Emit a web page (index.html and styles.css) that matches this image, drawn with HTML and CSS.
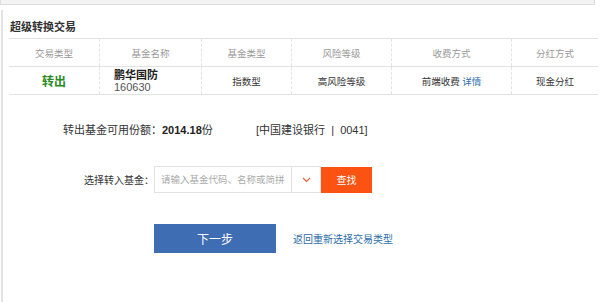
FILE: index.html
```html
<!DOCTYPE html>
<html lang="zh-cn">
<head>
  <meta charset="UTF-8" />
  <title>超级转换交易</title>
  <link rel="stylesheet" href="styles.css">
</head>
<body>
  <div class="topbar"></div>

  <div class="panel">
    <h2>超级转换交易</h2>

    <table class="fund-table">
      <tr>
        <th class="c1">交易类型</th>
        <th class="c2">基金名称</th>
        <th class="c3">基金类型</th>
        <th class="c4">风险等级</th>
        <th class="c5">收费方式</th>
        <th class="c6">分红方式</th>
      </tr>
      <tr>
        <td class="out">转出</td>
        <td class="name"><b>鹏华国防</b><span>160630</span></td>
        <td>指数型</td>
        <td>高风险等级</td>
        <td>前端收费 <a href="#">详情</a></td>
        <td>现金分红</td>
      </tr>
    </table>

    <div class="amount">
      <span class="label">转出基金可用份额：<b>2014.18</b>份</span>
      <span class="bank">[中国建设银行 &nbsp;|&nbsp; 0041]</span>
    </div>

    <form class="pick">
      <label>选择转入基金：</label>
      <div class="combo">
        <input type="text" placeholder="请输入基金代码、名称或简拼" />
        <span class="arrow">
          <svg width="9" height="6" viewBox="0 0 9 6"><path d="M1 1 L4.5 4.5 L8 1" fill="none" stroke="#e8623a" stroke-width="1.2"/></svg>
        </span>
      </div>
      <button type="button" class="btn-find">查找</button>
    </form>

    <div class="actions">
      <button type="button" class="btn-next">下一步</button>
      <a href="#" class="back">返回重新选择交易类型</a>
    </div>
  </div>
</body>
</html>
```

FILE: styles.css
```css
body {
  margin: 0;
  font-family: "Liberation Sans", Arial, "Noto Sans CJK SC", sans-serif;
  font-size: 11px;
  color: #333;
  background: #fff;
}
.topbar {
  height: 4px;
  margin-right: 5px;
  background: #f3f3f3;
  border: 1px solid #ddd;
  border-top: none;
}
.panel {
  margin: 5px 0 0 1px;
  border-left: 2px solid #e4e4e4;
  padding: 0 8px 0 6px;
  height: 292px;
  box-sizing: border-box;
}
h2 {
  margin: 0;
  padding: 8px 0 0 1px;
  height: 20px;
  font-size: 11px;
  font-weight: bold;
  color: #333;
}
.fund-table {
  width: 584px;
  border-collapse: collapse;
  table-layout: fixed;
}
.fund-table th,
.fund-table td {
  height: 27px;
  padding: 0;
  text-align: center;
  font-size: 9.5px;
  border-top: 1px solid #e2e2e2;
  border-bottom: 1px solid #e2e2e2;
  border-left: 1px dashed #e4e4e4;
}
.fund-table th:first-child,
.fund-table td:first-child {
  border-left: none;
}
.fund-table th {
  font-weight: normal;
  color: #999;
}
.c1 { width: 90px; }
.c2 { width: 101px; }
.c3 { width: 89px; }
.c4 { width: 99px; }
.c5 { width: 119px; }
.c6 { width: 86px; }
.fund-table td.out {
  color: #2c8a24;
  font-weight: bold;
  font-size: 12px;
}
.fund-table td.name {
  text-align: left;
  padding-left: 14px;
  line-height: 12px;
}
.name b {
  display: block;
  font-size: 11px;
  color: #222;
}
.name span {
  display: block;
  color: #555;
  font-size: 11px;
}
.fund-table a {
  color: #2a6db0;
  text-decoration: none;
}
.amount {
  display: flex;
  padding: 26px 0 0 54px;
  height: 18px;
}
.amount .label {
  width: 193px;
}
.amount b {
  color: #222;
}
.pick {
  display: flex;
  align-items: center;
  margin: 0;
  padding: 27px 0 0 0;
}
.pick label {
  width: 145px;
  text-align: right;
  font-size: 10px;
}
.combo {
  display: flex;
  border: 1px solid #e2e2e2;
  height: 27px;
  box-sizing: border-box;
}
.combo input {
  width: 136px;
  border: none;
  padding: 0 6px;
  font-size: 9.5px;
  font-family: inherit;
  box-sizing: border-box;
}
.combo input::placeholder {
  color: #aaa;
}
.arrow {
  width: 28px;
  border-left: 1px solid #e2e2e2;
  display: flex;
  align-items: center;
  justify-content: center;
}
.btn-find {
  width: 51px;
  height: 26px;
  border: none;
  background: #fc5212;
  color: #fff;
  font-size: 10px;
  font-family: inherit;
}
.actions {
  display: flex;
  align-items: center;
  padding: 31px 0 0 145px;
}
.btn-next {
  width: 122px;
  height: 29px;
  border: none;
  background: #3f6db4;
  color: #fff;
  font-size: 12px;
  font-family: inherit;
}
.back {
  margin-left: 17px;
  color: #2d6ea8;
  text-decoration: none;
  font-size: 10px;
}
```
